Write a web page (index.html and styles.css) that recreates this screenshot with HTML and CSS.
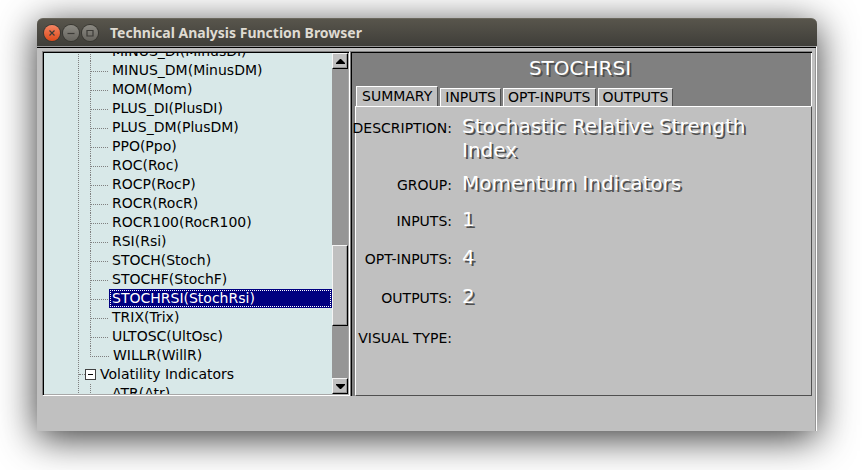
FILE: index.html
```html
<!DOCTYPE html>
<html lang="en">
<head>
<meta charset="utf-8">
<title>Technical Analysis Function Browser</title>
<link rel="stylesheet" href="styles.css">
</head>
<body>
<div class="window">
  <header class="titlebar">
    <button class="winbtn close" aria-label="Close"><svg viewBox="0 0 16 16"><path d="M5.5 5.5l5 5m0-5l-5 5"/></svg></button>
    <button class="winbtn" aria-label="Minimize"><svg viewBox="0 0 16 16"><path d="M4.500 8.500h7"/></svg></button>
    <button class="winbtn" aria-label="Maximize"><svg viewBox="0 0 16 16"><path d="M5 5.500h6v5.500h-6z"/></svg></button>
    <h1>Technical Analysis Function Browser</h1>
  </header>
  <main class="client">
    <section class="browser">
      <div class="tree">
        <ul class="categories">
          <li>
            <ul class="functions">
              <li><span>MINUS_DI(MinusDI)</span></li>
              <li><span>MINUS_DM(MinusDM)</span></li>
              <li><span>MOM(Mom)</span></li>
              <li><span>PLUS_DI(PlusDI)</span></li>
              <li><span>PLUS_DM(PlusDM)</span></li>
              <li><span>PPO(Ppo)</span></li>
              <li><span>ROC(Roc)</span></li>
              <li><span>ROCP(RocP)</span></li>
              <li><span>ROCR(RocR)</span></li>
              <li><span>ROCR100(RocR100)</span></li>
              <li><span>RSI(Rsi)</span></li>
              <li><span>STOCH(Stoch)</span></li>
              <li><span>STOCHF(StochF)</span></li>
              <li><span class="selected">STOCHRSI(StochRsi)</span></li>
              <li><span>TRIX(Trix)</span></li>
              <li><span>ULTOSC(UltOsc)</span></li>
              <li class="last"><span>WILLR(WillR)</span></li>
            </ul>
          </li>
          <li>
            <div class="category"><button class="toggle" aria-label="Collapse" aria-expanded="true"></button>Volatility Indicators</div>
            <ul class="functions">
              <li><span>ATR(Atr)</span></li>
            </ul>
          </li>
        </ul>
      </div>
      <div class="scrollbar">
        <button class="arrow" aria-label="Scroll up"><svg viewBox="0 0 9 5"><path d="M4 0h1l4 4v1H0V4z"/></svg></button>
        <div class="track"><div class="thumb"></div></div>
        <button class="arrow" aria-label="Scroll down"><svg viewBox="0 0 9 5"><path d="M4 5h1l4-4V0H0v1z"/></svg></button>
      </div>
    </section>
    <section class="details">
      <h2>STOCHRSI</h2>
      <div class="tabs" role="tablist">
        <button class="tab active" role="tab" aria-selected="true">SUMMARY</button>
        <button class="tab" role="tab">INPUTS</button>
        <button class="tab" role="tab">OPT-INPUTS</button>
        <button class="tab" role="tab">OUTPUTS</button>
      </div>
      <div class="page" role="tabpanel">
        <dl>
          <dt>DESCRIPTION:</dt><dd>Stochastic Relative Strength Index</dd>
          <dt>GROUP:</dt><dd>Momentum Indicators</dd>
          <dt>INPUTS:</dt><dd>1</dd>
          <dt>OPT-INPUTS:</dt><dd>4</dd>
          <dt>OUTPUTS:</dt><dd>2</dd>
          <dt>VISUAL TYPE:</dt><dd></dd>
        </dl>
      </div>
    </section>
  </main>
</div>
</body>
</html>
```
FILE: styles.css
```css
* { box-sizing: border-box; }

body {
  display: flex;
  height: 100vh;
  margin: 0;
  padding: 18px 45px 39px 37px;
  overflow: hidden;
  background: #fff;
  color: #000;
  font: 14px/19px "DejaVu Sans", sans-serif;
}

button { margin: 0; padding: 0; border: 0; font: inherit; color: inherit; }
h1, h2, ul, dl, dd { margin: 0; padding: 0; }
ul { list-style: none; }

.window {
  flex: 1;
  min-width: 0;
  display: flex;
  flex-direction: column;
  border-radius: 6px 6px 0 0;
  background: #c0c0c0;
  box-shadow: 0 7px 38px rgba(0, 0, 0, .8);
}

/* Title bar */
.titlebar {
  flex: none;
  display: flex;
  align-items: center;
  gap: 3px;
  height: 28px;
  padding-left: 7px;
  border-top: 1px solid #69665c;
  border-radius: 6px 6px 0 0;
  background: linear-gradient(#58554c, #3f3e39);
}
.titlebar h1 {
  margin-left: 9px;
  color: #dfdbd2;
  font: bold 14px/20px "Noto Sans", sans-serif;
  white-space: nowrap;
}
.winbtn {
  width: 16px;
  height: 16px;
  border-radius: 50%;
  background: linear-gradient(#8b8982, #66645e);
  box-shadow: 0 0 0 1px #383732;
}
.winbtn.close { background: linear-gradient(#f58563, #dd4a1a); }
.winbtn svg { display: block; fill: none; stroke: #3c3b37; stroke-width: 1.2; }

/* Client area */
.client {
  flex: 1;
  min-height: 0;
  display: flex;
  padding: 4px 4px 35px 5px;
  border-top: 1px solid #969696;
  border-right: 1px solid #fff;
  box-shadow: inset 0 1px #000, inset -1px 0 #969696;
}

.browser {
  flex: 2 0 308px;
  display: flex;
  border: 1px solid;
  border-color: #808080 #fff #fff #808080;
  box-shadow: inset 1px 1px #000, inset -1px -1px #a8a8a8;
  padding: 1px;
}
.tree {
  flex: 1;
  overflow: hidden;
  padding-left: 34px;
  background: #d8e8e8;
}
.categories { margin-top: -11px; border-left: 1px dotted #808080; }
.functions { margin-left: 11px; }
.functions li {
  display: flex;
  height: 19px;
  border-left: 1px dotted #808080;
}
.functions li::before {
  content: "";
  flex: none;
  width: 17px;
  height: 10px;
  border-bottom: 1px dotted #808080;
}
.functions .last { border-left: 0; }
.functions .last::before { width: 18px; border-left: 1px dotted #808080; }
.functions span { flex: 1; margin-left: 1px; padding-left: 3px; white-space: nowrap; }
.functions .selected {
  background: #000080;
  color: #fff;
  outline: 1px dotted #fff;
  outline-offset: -2px;
}
.category { display: flex; align-items: center; height: 19px; white-space: nowrap; }
.category::before { content: ""; width: 6px; border-top: 1px dotted #808080; }
.toggle {
  width: 11px;
  height: 11px;
  margin-right: 4px;
  border: 1px solid #404040;
  background: linear-gradient(#000, #000) center / 5px 1px no-repeat #fff;
}

.scrollbar { flex: none; width: 16px; display: flex; flex-direction: column; background: #969696; }
.arrow, .thumb {
  border: 1px solid;
  border-color: #f4f4f4 #000 #000 #f4f4f4;
  background: #c0c0c0;
  box-shadow: inset -1px -1px #969696;
}
.arrow { flex: none; display: grid; place-items: center; height: 16px; }
.arrow svg { width: 9px; height: 5px; }
.track { flex: 1; padding: 176px 0 52px; display: flex; }
.thumb { flex: 1; }

/* Details */
.details {
  flex: 3 0 462px;
  display: flex;
  flex-direction: column;
  padding: 2px 0 0 2px;
  background: #808080;
  box-shadow: inset 1px 1px #808080, inset 2px 2px #000, inset -1px 0 #fff;
}
.details h2 {
  padding: 3px 4px 0 0;
  color: #fff;
  font-size: 20px;
  font-weight: normal;
  line-height: 24px;
  text-align: center;
  text-shadow: 2px 2px #505050;
}
.tabs { display: flex; align-items: flex-end; gap: 2px; margin-top: 6px; padding-left: 4px; }
.tab {
  height: 18px;
  padding: 0 4px;
  border: 1px solid;
  border-color: #fff #505050 transparent #fff;
  border-bottom: 0;
  background: #c0c0c0;
  line-height: 17px;
}
.tab.active { height: 20px; padding: 0 5px; }
.page {
  flex: 1;
  margin-left: 3px;
  border: 1px solid;
  border-color: #fff #505050 #505050 #fff;
  background: #c0c0c0;
}
dl {
  display: grid;
  grid-template: 57px 36px 38px 39px 40px 24px / 96px 1fr;
  column-gap: 10px;
  padding: 7px 30px 0 0;
}
dt { display: flex; justify-content: flex-end; padding-top: 5px; white-space: nowrap; }
dd { color: #fff; font-size: 20px; line-height: 24px; text-shadow: 2px 2px #505050; }
```
